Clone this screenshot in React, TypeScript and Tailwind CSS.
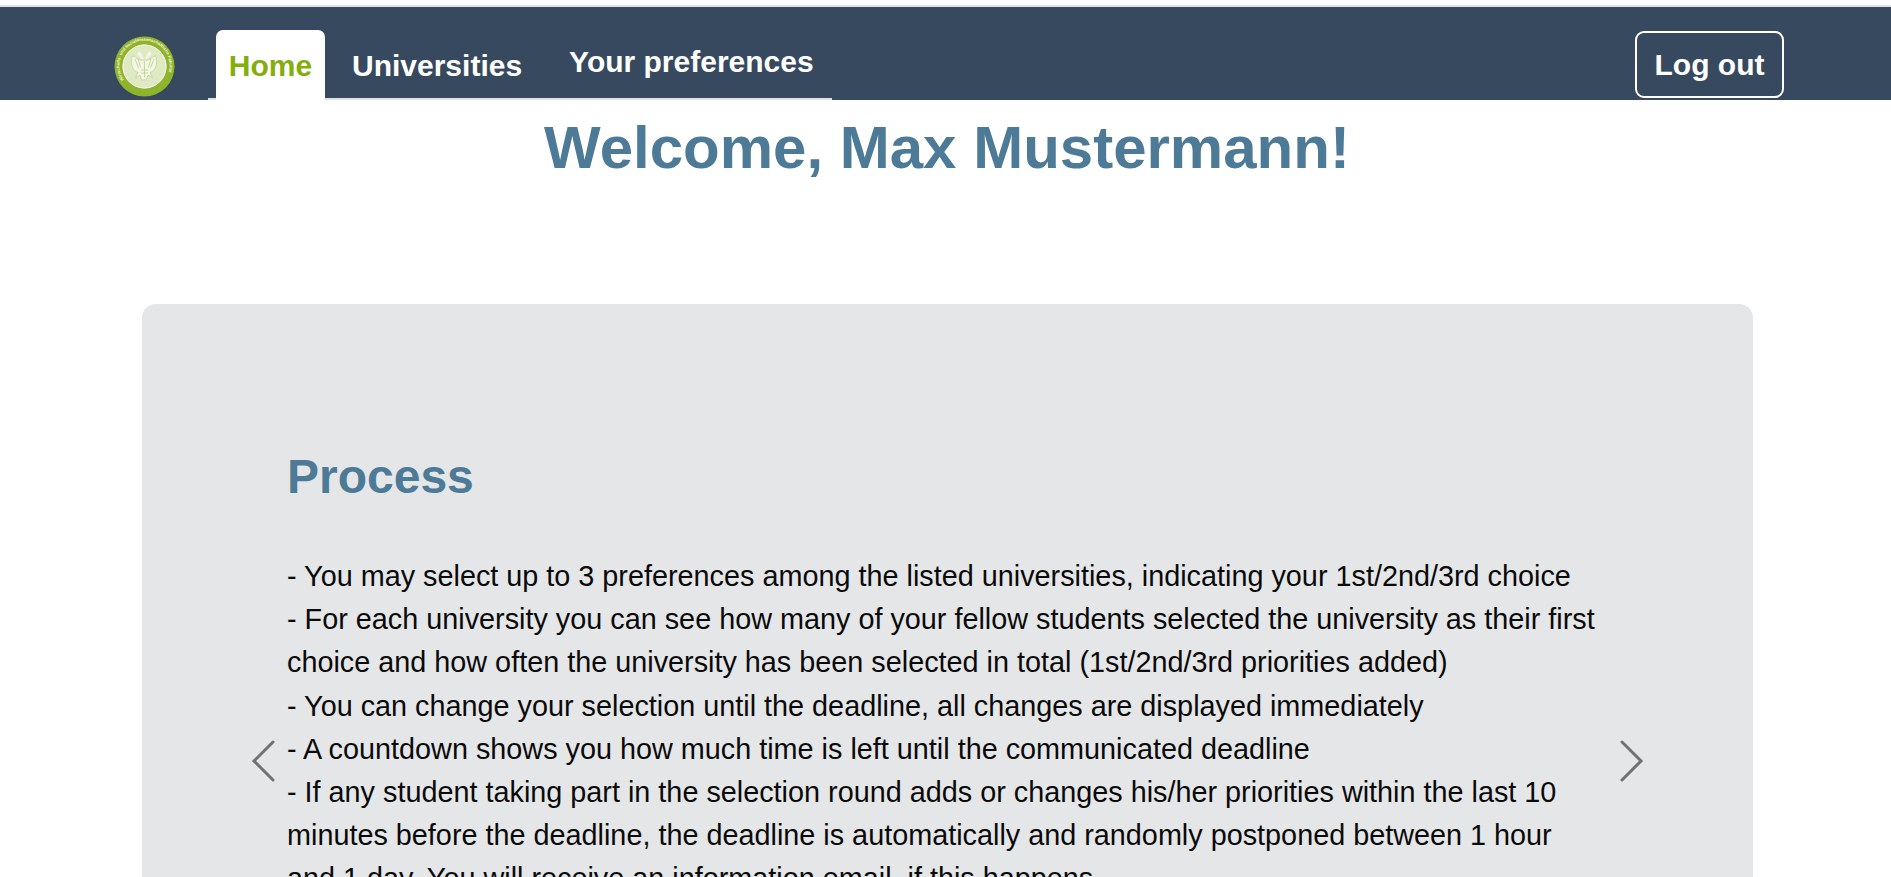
function Logo() {
  return (
    <svg width="61" height="61" viewBox="0 0 61 61" className="shrink-0">
      <defs>
        <path id="ring" d="M 10 44 A 25 25 0 1 1 51 44" fill="none" />
      </defs>
      <circle cx="30.5" cy="30.5" r="30" fill="#8fb32a" />
      <circle cx="30.5" cy="30.5" r="22" fill="#dfe9c4" />
      <circle cx="30.5" cy="30.5" r="21.5" fill="none" stroke="#f4f7e6" strokeWidth="1" />
      <text fontSize="4.2" fill="#f2f6df" fontFamily="Liberation Sans, sans-serif">
        <textPath href="#ring">Wirtschafts- und Sozialwissenschaftliche Fakultät</textPath>
      </text>
      {/* double headed eagle in the seal */}
      <path
        d="M26 15.5c-1.6.2-2.6 1.5-2.3 3 .2 1 .9 1.7 1.8 2 .8 1.6 2.6 2.6 4 3.2v-2.2c-1-.6-1.4-1.5-1.2-2.7l-2.3-3.3zM35 15.5c1.6.2 2.6 1.5 2.3 3-.2 1-.9 1.7-1.8 2-.8 1.6-2.6 2.6-4 3.2v-2.2c1-.6 1.4-1.5 1.2-2.7l2.3-3.3z"
        fill="#f3f6e4"
      />
      <path
        d="M29.2 24c-2.6.8-5-.6-7-2.2-1.2-1-2.6-1.9-4.2-1.7-1 3.7-.9 7.6.4 11 1 2.6 2.9 4.6 5.6 5.4l-2.4 5.2 4.4-2.4 1.6 4.6h4.8l1.6-4.6 4.4 2.4-2.4-5.2c2.7-.8 4.6-2.8 5.6-5.4 1.3-3.4 1.4-7.3.4-11-1.6-.2-3 .7-4.2 1.7-2 1.6-4.4 3-7 2.2z"
        fill="#f3f6e4"
        stroke="#b5cb80"
        strokeWidth="0.6"
      />
      <path
        d="M21 23l3.5 9M24 22.5l2.5 9M40 23l-3.5 9M37 22.5l-2.5 9M30.5 25v16M27 34h7M27 37h7"
        stroke="#b5cb80"
        strokeWidth="0.7"
        fill="none"
      />
    </svg>
  );
}

function Chevron({ dir }: { dir: "left" | "right" }) {
  return (
    <svg width="24" height="42" viewBox="0 0 24 42" className="shrink-0">
      <path
        d={dir === "left" ? "M22 2 L3 21 L22 40" : "M2 2 L21 21 L2 40"}
        fill="none"
        stroke="#6f7173"
        strokeWidth="3"
        strokeLinecap="round"
        strokeLinejoin="miter"
      />
    </svg>
  );
}

export default function App() {
  return (
    <div className="h-[877px] overflow-hidden bg-white font-['Liberation_Sans',Arial,sans-serif] text-[#0a0a0a]">
      {/* top strip */}
      <div className="h-[5px] bg-white" />
      <div className="h-[2px] bg-[#e2e3e3]" />

      {/* Navbar */}
      <nav className="flex h-[93px] items-end bg-[#36495e] pl-[114px] pr-[107px] text-[30px] font-bold text-white">
        <div className="mb-[3px]">
          <Logo />
        </div>
        <ul className="ml-[33px] flex h-[70px] border-b-2 border-[#dee2e6] pr-[18px]">
          <li className="ml-[8px] mb-[-2px] flex h-[70px] w-[109px] items-center justify-center rounded-t-[7px] bg-white text-[#85ad0e]">
            Home
          </li>
          <li className="ml-[27px] flex items-center pt-[2px]">Universities</li>
          <li className="ml-[47px] flex items-start pt-[9px]">Your preferences</li>
        </ul>
        <button className="mb-[2px] ml-auto flex h-[67px] w-[149px] items-center justify-center rounded-[9px] border-2 border-white text-[30px] font-bold">
          Log out
        </button>
      </nav>

      <h1 className="mt-[12px] pl-[3px] text-center text-[60px] font-bold leading-[72px] text-[#4d7a97]">
        Welcome, Max Mustermann!
      </h1>

      {/* Carousel panel */}
      <section className="relative ml-[142px] mr-[138px] mt-[120px] h-[700px] rounded-[14px] bg-[#e5e6e8] pl-[145px] pr-[146px] pt-[144px]">
        <h2 className="text-[48px] font-bold leading-[58px] text-[#4d7a97]">Process</h2>
        <p className="mt-[49px] text-[28.8px] leading-[43.2px]">
          - You may select up to 3 preferences among the listed universities, indicating your 1st/2nd/3rd choice
          <br />- For each university you can see how many of your fellow students selected the university as their first
          choice and how often the university has been selected in total (1st/2nd/3rd priorities added)
          <br />- You can change your selection until the deadline, all changes are displayed immediately
          <br />- A countdown shows you how much time is left until the communicated deadline
          <br />- If any student taking part in the selection round adds or changes his/her priorities within the last 10
          minutes before the deadline, the deadline is automatically and randomly postponed between 1 hour and 1 day. You
          will receive an information email, if this happens
        </p>
        <div className="absolute left-[109px] top-[436px]">
          <Chevron dir="left" />
        </div>
        <div className="absolute left-[1478px] top-[436px]">
          <Chevron dir="right" />
        </div>
      </section>
    </div>
  );
}
